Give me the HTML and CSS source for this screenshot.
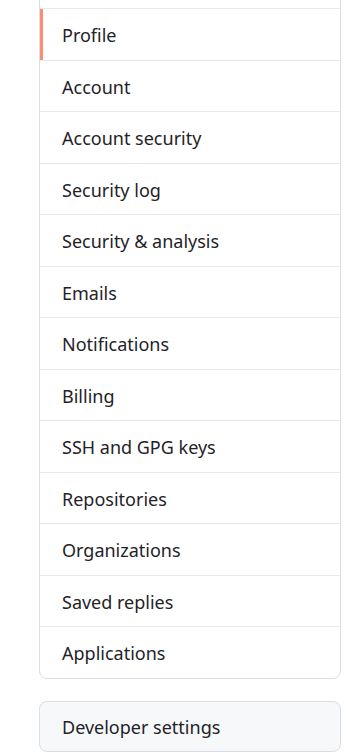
FILE: index.html
```html
<!DOCTYPE html>
<html lang="en">
<head>
<meta charset="utf-8">
<title>Settings</title>
<link rel="stylesheet" href="styles.css">
</head>
<body>
<div class="sidebar">
  <nav class="menu menu-main">
    <a class="menu-item selected" href="#">Profile</a>
    <a class="menu-item" href="#">Account</a>
    <a class="menu-item" href="#">Account security</a>
    <a class="menu-item" href="#">Security log</a>
    <a class="menu-item" href="#">Security &amp; analysis</a>
    <a class="menu-item" href="#">Emails</a>
    <a class="menu-item" href="#">Notifications</a>
    <a class="menu-item" href="#">Billing</a>
    <a class="menu-item" href="#">SSH and GPG keys</a>
    <a class="menu-item" href="#">Repositories</a>
    <a class="menu-item" href="#">Organizations</a>
    <a class="menu-item" href="#">Saved replies</a>
    <a class="menu-item" href="#">Applications</a>
  </nav>
  <nav class="menu menu-muted">
    <a class="menu-item" href="#">Developer settings</a>
  </nav>
</div>
</body>
</html>
```
FILE: styles.css
```css
html, body {
  margin: 0;
  padding: 0;
  background: #ffffff;
}
body {
  font-family: "Noto Sans", "Open Sans", sans-serif;
  color: #1f2328;
}
.sidebar {
  padding: 0 5px 0 39px;
  display: flex;
  flex-direction: column;
  gap: 22px;
}
.menu {
  display: flex;
  flex-direction: column;
  border: 1px solid #d8dee4;
  border-radius: 8px;
  overflow: hidden;
  background: #ffffff;
}
.menu-main {
  margin-top: -10px;
  padding-top: 17px;
}
.menu-main .menu-item:first-child {
  border-top: 1px solid #e6eaef;
}
.menu-item {
  position: relative;
  display: block;
  padding: 12px 22px 10px;
  font-size: 18px;
  line-height: 28.5px;
  color: #1f2328;
  text-decoration: none;
  border-bottom: 1px solid #e6eaef;
}
.menu-item:last-child {
  border-bottom: 0;
}
.menu-item.selected::before {
  content: "";
  position: absolute;
  left: 0;
  top: 0;
  bottom: 0;
  width: 3px;
  background: #fd8c73;
}
.menu-muted {
  background: #f6f8fa;
}
.menu-muted .menu-item {
  padding-top: 11px;
  padding-bottom: 10px;
}
```
